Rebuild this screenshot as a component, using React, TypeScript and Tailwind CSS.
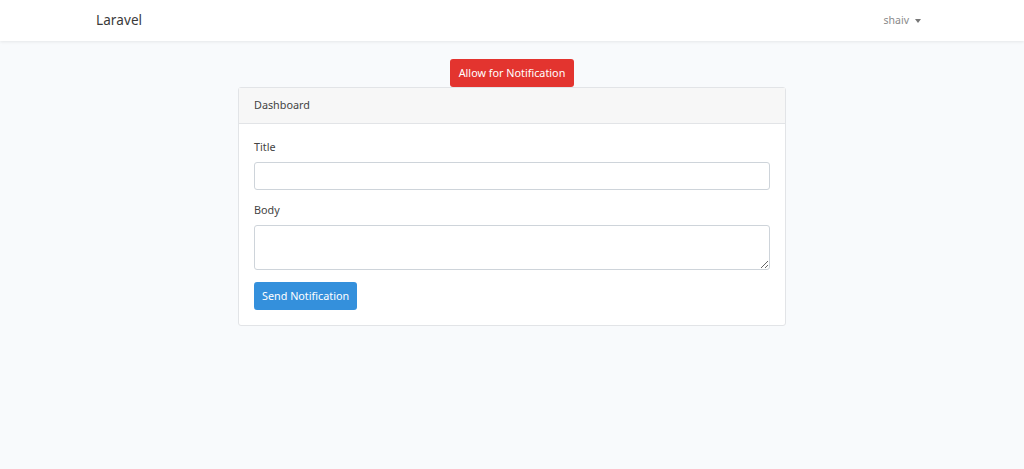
import React from "react";

export default function App() {
  return (
    <div className="min-h-[469px] bg-[#f8fafc] text-[#212529]" style={{ fontFamily: '"Noto Sans", "Open Sans", sans-serif' }}>
      <nav className="h-[41px] bg-white shadow-[0_1px_3px_rgba(0,0,0,0.08)] flex items-center">
        <div className="w-full px-[96px] flex items-center justify-between">
          <span className="text-[13.5px] text-[#3a3a3a] tracking-[0.1px]">Laravel</span>
          <div className="flex items-center gap-[6px] mr-[7px] text-[10.5px] text-[#8a8a8a]">
            <span>shaiv</span>
            <span className="w-0 h-0 border-l-[3.5px] border-r-[3.5px] border-t-[4px] border-l-transparent border-r-transparent border-t-[#777]" />
          </div>
        </div>
      </nav>
      <div className="flex flex-col items-center pt-[18px]">
        <button className="h-[28px] px-[9px] bg-[#e3342f] text-white text-[10.8px] rounded-[3px]">Allow for Notification</button>
        <div className="w-[548px] bg-white border border-[#e2e4e7] rounded-[3px]">
          <div className="h-[36px] bg-[#f7f7f7] border-b border-[#e2e4e7] flex items-center px-[15px] text-[10.8px] text-[#444]">Dashboard</div>
          <div className="px-[15px] pt-[16px] pb-[15px] flex flex-col">
            <label className="text-[10.8px] text-[#444] leading-[14px]">Title</label>
            <div className="mt-[8px] h-[28px] border border-[#ced4da] rounded-[3px] bg-white" />
            <label className="mt-[13px] text-[10.8px] text-[#444] leading-[14px]">Body</label>
            <textarea className="mt-[8px] h-[45px] border border-[#ced4da] rounded-[3px] bg-white resize-y" />
            <div className="mt-[12px]">
              <button className="h-[28px] px-[8px] bg-[#3490dc] text-white text-[10.8px] rounded-[3px]">Send Notification</button>
            </div>
          </div>
        </div>
      </div>
    </div>
  );
}
